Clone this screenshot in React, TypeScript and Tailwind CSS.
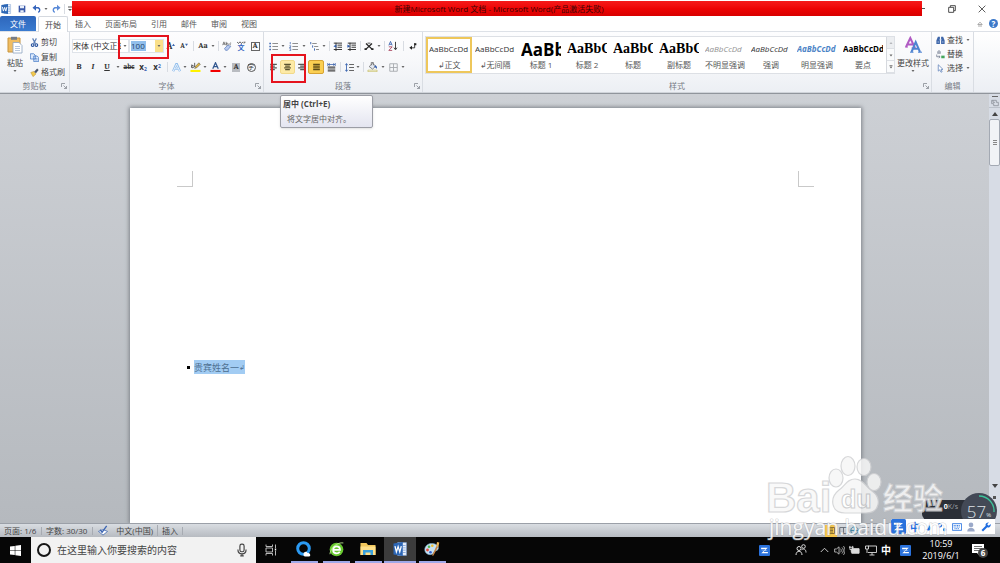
import type { ReactNode } from 'react';

type ChildProps = { children?: ReactNode };

function Svg({ box = '0 0 12 12', className = 'h-3 w-3', children }: ChildProps & { box?: string; className?: string }) {
  return (
    <svg viewBox={box} className={`${className} shrink-0`} fill="none" aria-hidden="true">
      {children}
    </svg>
  );
}

function Tool({ label, w = 'w-3.5', active = '', children }: ChildProps & { label: string; w?: string; active?: string }) {
  return (
    <button type="button" aria-label={label} className={`${w} ${active} flex h-3.5 shrink-0 items-center justify-center leading-none`}>
      {children}
    </button>
  );
}

function Caret({ w = 'w-1.5' }: { w?: string }) {
  return (
    <span className={`${w} flex shrink-0 justify-center`}>
      <Svg box="0 0 4 4" className="h-1 w-1">
        <path d="M.5 1h3L2 3z" fill="#666" />
      </Svg>
    </span>
  );
}

function Sep({ w = 'w-1' }: { w?: string }) {
  return (
    <span className={`${w} flex h-2.5 shrink-0 justify-center`}>
      <span className="w-px bg-[#d8dce2]" />
    </span>
  );
}

function Group({ name, width, launcher = true, children }: ChildProps & { name: string; width: string; launcher?: boolean }) {
  return (
    <section
      aria-label={name}
      className={`${width} relative flex flex-col border-r border-[#d9dde3] bg-linear-to-b from-[#fdfdfe] via-[#f7f8fa] to-[#eceff4]`}
    >
      <div className="h-12">{children}</div>
      <div className="flex h-3 items-center">
        <span className="flex-1 pl-2 text-center leading-3 text-[#777c85]">{name}</span>
        <span className="w-2">
          {launcher && (
            <Svg box="0 0 6 6" className="h-1.5 w-1.5">
              <path d="M.5 4V.5H4M2.5 2.5l3 3M5.5 3v2.5H3" stroke="#868b93" strokeWidth=".8" />
            </Svg>
          )}
        </span>
      </div>
    </section>
  );
}

function SIcon({ className }: { className: string }) {
  return (
    <Svg className={className}>
      <rect width="12" height="12" rx="1.2" fill="#2a72dd" />
      <path d="M2.3 3.8h5.4M4.3 8.3h5.4" stroke="#fff" strokeWidth="1.5" />
      <path d="M9.6 3.1 5.900 6.400H2.400L6.200 5.600 7.600 3.100zM2.400 9l3.700-3.300h3.500L5.800 6.500 4.400 9z" fill="#fff" />
    </Svg>
  );
}

function WordIcon({ className }: { className: string }) {
  return (
    <Svg className={className}>
      <path d="M4 .5h7.5v11H4z" fill="#e9f1fc" stroke="#7ea0d0" strokeWidth=".6" />
      <path d="M8.5 3h2.3M8.5 5h2.3M8.5 7h2.3M8.5 9h2.3" stroke="#6b93cf" strokeWidth=".6" />
      <path d="M.4 1.2 8.4 0v12L.4 10.8z" fill="#2c66b5" />
      <path d="m1.7 3.5 1.2 5L4.4 4l1.4 4.5 1.3-5" stroke="#fff" strokeWidth="1.1" />
    </Svg>
  );
}

function TitleBar() {
  return (
    <header className="flex h-4 items-stretch bg-white pt-px">
      <div className="flex w-[72px] shrink-0 items-center">
        <WordIcon className="h-2.5 w-3" />
        <span className="ml-1.5 flex w-2 justify-center">
          <Svg className="h-2 w-2">
            <path d="M1 1h10v10H1z" fill="#3958a8" />
            <path d="M3 1h6v4H3zM3.5 8h5v3h-5z" fill="#e8effb" />
          </Svg>
        </span>
        <button type="button" aria-label="撤销" className="ml-1.5">
          <Svg className="h-2.5 w-2.5">
            <path d="M3 4.5h4.5a3 3 0 0 1 0 5.5" stroke="#3665bc" strokeWidth="1.7" />
            <path d="M4.8 1v7L.6 4.5z" fill="#3665bc" />
          </Svg>
        </button>
        <Caret w="w-2" />
        <button type="button" aria-label="重复" className="ml-px">
          <Svg className="h-2.5 w-2.5">
            <path d="M9 4.5H4.5a3 3 0 0 0 0 5.5" stroke="#5b8bd8" strokeWidth="1.7" />
            <path d="M7.2 1v7l4.2-3.5z" fill="#5b8bd8" />
          </Svg>
        </button>
        <Sep w="w-1.5" />
        <Svg box="0 0 6 6" className="h-1.5 w-1.5">
          <path d="M1 1h4" stroke="#555" />
          <path d="M1 3h4L3 5z" fill="#555" />
        </Svg>
      </div>
      <h1 className="flex min-w-0 flex-1 items-center justify-center bg-linear-to-b from-[#f51a1a] via-[#ee0404] to-[#d80000] pl-1 leading-none whitespace-nowrap text-[#3a0505]">
        新建Microsoft Word 文档 - Microsoft Word(产品激活失败)
      </h1>
      <div className="flex w-[78px] shrink-0 items-center">
        <button type="button" aria-label="最小化" className="flex w-4">
          <span className="h-px w-[3px] bg-[#555]" />
        </button>
        <button type="button" aria-label="还原" className="flex w-7 justify-center">
          <Svg className="h-2 w-2">
            <path d="M1 3.5h7.5V11H1zM3.5 3V1H11v7.5H9" stroke="#333" strokeWidth="1.3" />
          </Svg>
        </button>
        <button type="button" aria-label="关闭" className="flex w-8 justify-center">
          <Svg className="h-2 w-2">
            <path d="m1 1 10 10M11 1 1 11" stroke="#333" strokeWidth="1.2" />
          </Svg>
        </button>
      </div>
    </header>
  );
}

const tabs = [
  { name: '插入', w: 'w-[30px]' },
  { name: '页面布局', w: 'w-[46px]' },
  { name: '引用', w: 'w-[30px]' },
  { name: '邮件', w: 'w-[30px]' },
  { name: '审阅', w: 'w-[30px]' },
  { name: '视图', w: 'w-[30px]' },
];

function Tabs() {
  return (
    <nav className="flex h-4 items-stretch border-b border-[#dde1e7] bg-white leading-none">
      <button type="button" className="w-9 rounded-t-xs bg-linear-to-b from-[#2e66bb] to-[#3a7bd0] text-white">
        文件
      </button>
      <button type="button" className="-mb-px ml-0.5 w-[30px] rounded-t-xs border border-b-0 border-[#d5d9df] bg-white text-[#444]">
        开始
      </button>
      {tabs.map((t) => (
        <button key={t.name} type="button" className={`${t.w} text-[#555]`}>
          {t.name}
        </button>
      ))}
      <div className="ml-auto flex items-center gap-1.5 pr-0.5">
        <button type="button" aria-label="折叠功能区">
          <Svg box="0 0 6 6" className="h-1.5 w-1.5">
            <path d="M.8 3.5 3 1.2l2.2 2.3zM1 5h4" stroke="#888" strokeWidth=".7" />
          </Svg>
        </button>
        <button type="button" aria-label="帮助" className="flex h-[9px] w-[9px] items-center justify-center rounded-full bg-[#3b78c9] font-bold text-white">
          ?
        </button>
      </div>
    </nav>
  );
}

function Clipboard() {
  return (
    <Group name="剪贴板" width="w-[70px]">
      <div className="flex h-full">
        <button type="button" className="flex w-[30px] flex-col items-center pt-1 text-[#444]">
          <Svg box="0 0 16 18" className="h-[18px] w-4">
            <path d="M1 2h12v14H1z" fill="#f0bd62" stroke="#c8943c" />
            <path d="M4 .8h6v3H4z" fill="#777d87" />
            <path d="M6 6.5h6l3 3V17H6z" fill="#fff" stroke="#8da3c0" strokeWidth=".8" />
            <path d="M8 10.5h5M8 12.5h5M8 14.5h5" stroke="#9bb0cd" strokeWidth=".7" />
          </Svg>
          <span className="mt-[3px] leading-3">粘贴</span>
          <Caret />
        </button>
        <div className="flex flex-col gap-px pt-[3px] text-[#444]">
          <button type="button" className="flex h-3.5 items-center gap-0.5 leading-none">
            <Svg className="h-[9px] w-[9px]">
              <path d="m3.5.5 3.7 7M8.5.5 4.8 7.5" stroke="#597db5" strokeWidth="1.5" />
              <circle cx="3.5" cy="9.4" r="1.8" stroke="#244f9c" strokeWidth="1.4" />
              <circle cx="8.5" cy="9.4" r="1.8" stroke="#244f9c" strokeWidth="1.4" />
            </Svg>
            剪切
          </button>
          <button type="button" className="flex h-3.5 items-center gap-0.5 leading-none">
            <Svg className="h-[9px] w-[9px]">
              <path d="M.5 1H5l2 2v5H.5zM5 4h4.5l2 2v5.5H5z" fill="#dce9fb" stroke="#4277c4" />
              <path d="M6.5 7.5h3.5M6.5 9.3h3.5" stroke="#4277c4" strokeWidth=".7" />
            </Svg>
            复制
          </button>
          <button type="button" className="flex h-3.5 items-center gap-0.5 leading-none">
            <Svg className="h-[9px] w-[9px]">
              <path d="m1 6 4-1.5L8 8l-4 3.5z" fill="#f2c94f" stroke="#b08a2a" strokeWidth=".6" />
              <path d="m5.5 5 4-4.3 2 1.8L8 7z" fill="#49546c" />
            </Svg>
            格式刷
          </button>
        </div>
      </div>
    </Group>
  );
}

function FontGroup() {
  return (
    <Group name="字体" width="w-[194px]">
      <div className="flex h-full flex-col gap-[7px] pt-[7px] pl-0.5">
        <div className="flex items-center">
          <div className="flex h-3.5 w-[57px] items-center border border-[#dfe3e9] bg-white">
            <select aria-label="字体" className="w-12 appearance-none overflow-hidden whitespace-nowrap text-[#333]">
              <option>宋体 (中文正文)</option>
            </select>
            <Caret w="w-2" />
          </div>
          <div className="flex h-3.5 w-[35px] items-center border border-[#dfe3e9] bg-white">
            <input aria-label="字号" defaultValue="100" className="mx-px h-2.5 w-[15px] bg-[#91bfec] text-[8px] text-[#23436b]" />
            <span className="ml-auto flex h-full w-2 items-center justify-center bg-[#fae08a]">
              <Caret />
            </span>
          </div>
          <Tool label="增大字体">
            <span className="font-serif text-[9px] font-bold text-[#333]">A</span>
            <Svg box="0 0 4 6" className="h-1.5 w-[3px]">
              <path d="M0 3h4L2 0z" fill="#3b65b0" />
            </Svg>
          </Tool>
          <Tool label="缩小字体" w="w-3">
            <span className="font-serif text-[7px] font-bold text-[#333]">A</span>
            <Svg box="0 0 4 6" className="h-1.5 w-[3px]">
              <path d="M0 0h4L2 3z" fill="#3b65b0" />
            </Svg>
          </Tool>
          <Sep w="w-1.5" />
          <Tool label="更改大小写">
            <span className="font-serif font-bold text-[#333]">Aa</span>
          </Tool>
          <Caret />
          <Sep />
          <Tool label="清除格式">
            <Svg className="h-2.5 w-2.5">
              <path d="m.8 5 1.500-4 1.500 4M1.300 3.700h2M5 1v4M5 3.700a1.300 1.200 0 1 1 0 .2M11 2.500c-2-.7-2.500 2.500-.2 2.200" stroke="#555" strokeWidth=".8" />
              <path d="m3 9 4-4 3.500 1.500-4 4.700H4.300z" fill="#b8caef" stroke="#5274b8" strokeWidth=".8" />
            </Svg>
          </Tool>
          <Tool label="拼音指南">
            <span className="flex flex-col items-center leading-none">
              <Svg box="0 0 9 3" className="h-[3px] w-[9px]">
                <path d="m0 .8 1.500 1.700L3 .8l1.500 1.700L6 .8M7 2.500V1.200h1.500" stroke="#444" strokeWidth=".8" />
              </Svg>
              <span className="text-[7px] leading-[7px] font-bold text-[#2d5fc0]">文</span>
            </span>
          </Tool>
          <Tool label="字符边框">
            <span className="flex h-[9px] w-[9px] items-center justify-center border border-[#666] font-serif font-bold text-[#333]">A</span>
          </Tool>
        </div>
        <div className="flex items-center text-[#333]">
          <Tool label="加粗"><b className="font-serif">B</b></Tool>
          <Tool label="倾斜"><b className="font-serif italic">I</b></Tool>
          <Tool label="下划线"><b className="font-serif underline">U</b></Tool>
          <Caret w="w-2" />
          <Tool label="删除线"><b className="font-serif text-[7px] line-through">abc</b></Tool>
          <Tool label="下标"><b>x<sub className="text-[5px] text-[#3b65b0]">2</sub></b></Tool>
          <Tool label="上标"><b>x<sup className="text-[5px] text-[#3b65b0]">2</sup></b></Tool>
          <Sep w="w-1.5" />
          <Tool label="文本效果" w="w-3">
            <Svg className="h-[9px] w-[9px]">
              <path d="M1.5 11 5.8 1.3h.6L10.7 11M3.5 7.8h5" stroke="#8fbdec" strokeWidth="3" />
              <path d="M1.5 11 6 1.5l4.5 9.5M3.5 7.8h5" stroke="#fff" strokeWidth="1" />
            </Svg>
          </Tool>
          <Caret />
          <Tool label="突出显示">
            <Svg className="h-2.5 w-[11px]">
              <path d="M0 9.5h12V12H0z" fill="#fff200" />
              <path d="M1.5 7V3M1.5 5.5a1.3 1.3 0 1 1 0 .2M5 1v5" stroke="#444" />
              <path d="m5 7.7 1-2.6L10 1l1.8 1.6-4.2 4.2z" fill="#e6b93f" stroke="#5a5c4a" strokeWidth=".7" />
            </Svg>
          </Tool>
          <Caret />
          <Tool label="字体颜色">
            <Svg className="h-2.5 w-[11px]">
              <path d="M0 9.5h12V12H0z" fill="#f20000" />
              <path d="M2.7 8 6 .8 9.3 8M4 5.5h4" stroke="#33588f" strokeWidth="1.5" />
            </Svg>
          </Tool>
          <Caret />
          <Tool label="字符底纹" w="w-4">
            <span className="flex h-[9px] w-2 items-center justify-center bg-[#b9bcc1] font-serif font-bold">A</span>
          </Tool>
          <Tool label="带圈字符">
            <span className="flex h-[9px] w-[9px] items-center justify-center rounded-full border border-[#555] text-[6px]">字</span>
          </Tool>
        </div>
      </div>
      <span className="pointer-events-none absolute top-[3px] left-12 z-10 h-6 w-[51px] border-2 border-[#e5131d]" />
    </Group>
  );
}

function Lines({ d, stroke = '#444' }: { d: string; stroke?: string }) {
  return (
    <Svg className="h-[9px] w-[9px]">
      <path d={d} stroke={stroke} strokeWidth="1.2" />
    </Svg>
  );
}

function AlignLines({ d, stroke = '#555' }: { d: string; stroke?: string }) {
  return (
    <Svg className="h-2 w-[9px]">
      <path d={d} stroke={stroke} strokeWidth="1.8" />
    </Svg>
  );
}

function ParagraphGroup() {
  return (
    <Group name="段落" width="w-[159px]">
      <div className="flex h-full flex-col gap-[7px] pt-[7px] pl-0.5">
        <div className="flex items-center">
          <Tool label="项目符号">
            <Svg className="h-[9px] w-[9px]">
              <path d="M4.5 2H12M4.5 6H12M4.5 10H12" stroke="#777" strokeWidth="1.1" />
              <path d="M.5 1h2v2h-2zM.5 5h2v2h-2zM.5 9h2v2h-2z" fill="#315dac" />
            </Svg>
          </Tool>
          <Caret />
          <Tool label="编号" w="w-[15px]">
            <Svg className="h-[9px] w-[9px]">
              <path d="M4.5 2H12M4.5 6H12M4.5 10H12" stroke="#777" strokeWidth="1.1" />
              <path d="M1.7 0v3M.5 5h1.8v1.2L.6 7.5h2M.5 9h1.8v2.5H.5" stroke="#315dac" strokeWidth=".9" />
            </Svg>
          </Tool>
          <Caret />
          <Tool label="多级列表">
            <Svg className="h-[9px] w-[9px]">
              <path d="M3 2h6M5.5 6H11M8 10h4" stroke="#777" strokeWidth="1.1" />
              <path d="M1 0v3M3.5 4.5v3M6 8.5v3" stroke="#315dac" strokeWidth="1.2" />
            </Svg>
          </Tool>
          <Caret />
          <Sep />
          <Tool label="减少缩进" w="w-[13px]">
            <Svg className="h-[9px] w-[9px]">
              <path d="M1 1.5h11M6 4.2h6M6 7h6M1 10h11M4 1v11" stroke="#333" strokeWidth="1.3" />
              <path d="M4.5 3.2v4.6L.5 5.5z" fill="#315dac" />
            </Svg>
          </Tool>
          <Tool label="增加缩进">
            <Svg className="h-[9px] w-[9px]">
              <path d="M1 1.5h11M6 4.2h6M6 7h6M1 10h11M4 1v11" stroke="#333" strokeWidth="1.3" />
              <path d="M.5 3.2v4.6l4-2.3z" fill="#315dac" />
            </Svg>
          </Tool>
          <Sep />
          <Tool label="中文版式">
            <Svg className="h-[9px] w-2.5">
              <path d="m2 2 8 7.5M10 2 2 9.5" stroke="#222" strokeWidth="1.7" />
              <path d="M4 1.5h4" stroke="#222" />
              <path d="M0 8.3h3v2.4H0zM9 8.3h3v2.4H9z" fill="#222" />
            </Svg>
          </Tool>
          <Caret />
          <Sep />
          <Tool label="排序">
            <Svg className="h-2.5 w-2.5">
              <path d="m1 5.3 2-4.8 2 4.8M1.8 4h2.5" stroke="#315dac" />
              <path d="M1 7h4l-4 4.3h4" stroke="#a33b55" />
              <path d="M9 1v9M7.2 8 9 10.6 10.8 8" stroke="#444" strokeWidth="1.2" />
            </Svg>
          </Tool>
          <Sep w="w-1.5" />
          <Tool label="显示编辑标记">
            <Svg className="h-[9px] w-2">
              <path d="M8.5 1v7H4" stroke="#333" strokeWidth="1.4" />
              <path d="m.5 8 4-3v6zM8 1h3v3H8z" fill="#222" />
            </Svg>
          </Tool>
        </div>
        <div className="flex items-center">
          <Tool label="左对齐"><AlignLines d="M1 2h10M1 4.7h7M1 7.4h10M1 10h7" /></Tool>
          <Tool label="居中" w="w-[15px]" active="rounded-xs border border-[#f1d98a] bg-[#fdeaa6]"><AlignLines d="M1 2h10M2.500 4.700h7M1 7.400h10M2.500 10h7" stroke="#5a532f" /></Tool>
          <Tool label="右对齐" w="w-[13px]"><AlignLines d="M1 2h10M4 4.7h7M1 7.4h10M4 10h7" /></Tool>
          <Tool label="两端对齐" w="w-4" active="rounded-xs border border-[#d7a334] bg-[#fbcf52]"><AlignLines d="M1 2h10M1 4.700h10M1 7.400h10M1 10h10" stroke="#5d4c17" /></Tool>
          <Tool label="分散对齐">
            <Svg className="h-[9px] w-[9px]">
              <path d="M1 5.5h10M1 8h10M1 10.5h10" stroke="#444" strokeWidth="1.6" />
              <path d="M1 0v4M11 0v4M1.5 2h9M4 .7 2 2l2 1.3M8 .7 10 2 8 3.3" stroke="#365eaa" />
            </Svg>
          </Tool>
          <Sep w="w-[5px]" />
          <Tool label="行距" w="w-3">
            <Svg className="h-[9px] w-[9px]">
              <path d="M5.5 2H12M5.5 6H12M5.5 10H12" stroke="#555" strokeWidth="1.2" />
              <path d="M2 1v10M.3 3 2 .8 3.7 3M.3 9 2 11.2 3.7 9" stroke="#315dac" strokeWidth="1.1" />
            </Svg>
          </Tool>
          <Caret />
          <Sep />
          <Tool label="底纹" w="w-[15px]">
            <Svg className="h-2.5 w-[11px]">
              <path d="M.5 9.8h11v1.8H.5z" fill="#fff" stroke="#c0b552" strokeWidth=".8" />
              <path d="m2 5.5 4-4 4 3.5-4 3.5z" fill="#e5eaf2" stroke="#555" strokeWidth=".8" />
              <path d="M9 4c2 .5 2.6 2 2.4 4.2C10 7.4 9.7 6 8 6z" fill="#315dac" />
              <path d="M4.5 4V.5H7V4" stroke="#555" strokeWidth=".8" />
            </Svg>
          </Tool>
          <Caret />
          <Tool label="边框"><Lines d="M1 1h10v10H1zM6 1v10M1 6h10" stroke="#a6a9ae" /></Tool>
          <Caret />
        </div>
      </div>
      <span className="pointer-events-none absolute top-[22px] left-[7px] z-10 h-[29px] w-[35px] border-2 border-[#e5131d]" />
      <div role="tooltip" className="absolute top-[63px] left-4 z-20 h-[33px] w-[93px] rounded-xs border border-[#9b9da5] bg-linear-to-b from-white to-[#e4e5f0] px-0.5 shadow-sm">
        <p className="mt-0.5 leading-3 font-bold text-[#444]">居中 (Ctrl+E)</p>
        <p className="mt-[3px] pl-1 leading-3 text-[#666]">将文字居中对齐。</p>
      </div>
    </Group>
  );
}

const styles = [
  { name: '↲正文', sample: 'text-[8px] text-[#333]' },
  { name: '↲无间隔', sample: 'text-[8px] text-[#333]' },
  { name: '标题 1', sample: 'text-[17px] font-bold text-black' },
  { name: '标题 2', sample: "text-[14px] font-bold text-black font-['Liberation_Serif',serif]" },
  { name: '标题', sample: "text-[14px] font-bold text-black font-['Liberation_Serif',serif]" },
  { name: '副标题', sample: "text-[14px] font-bold text-black font-['Liberation_Serif',serif]" },
  { name: '不明显强调', sample: 'text-[8px] italic text-[#929292]' },
  { name: '强调', sample: 'text-[8px] italic text-[#333]' },
  { name: '明显强调', sample: 'text-[8px] italic font-bold text-[#4b83c6]' },
  { name: '要点', sample: 'text-[8px] font-bold text-black' },
];

function StylesGroup() {
  return (
    <Group name="样式" width="w-[509px]">
      <div className="flex h-full items-start pt-1 pl-0.5">
        <div className="flex h-[38px] w-[470px] border border-[#dde0e5] bg-white">
          {styles.map((s, i) => (
            <button
              key={s.name}
              type="button"
              className={`${i === 0 ? 'border-2 border-[#eec75b]' : 'border-2 border-transparent'} flex w-[46px] shrink-0 flex-col items-center overflow-hidden text-[#555]`}
            >
              <span className={`${s.sample} flex h-[22px] w-10 items-center overflow-hidden leading-none whitespace-nowrap`}>AaBbCcDd</span>
              <span className="leading-3 whitespace-nowrap">{s.name}</span>
            </button>
          ))}
          <div className="flex flex-1 flex-col border-l border-[#d6d9de]">
            {['上一行', '下一行', '更多'].map((n, i) => (
              <button key={n} type="button" aria-label={n} className={`${i === 0 ? 'bg-[#eceef1]' : 'bg-[#fafbfc]'} flex flex-1 items-center justify-center border-b border-[#dde0e5]`}>
                <Svg box="0 0 4 4" className="h-1 w-1">
                  <path d={i === 0 ? 'M.5 3h3L2 1z' : 'M.5 1.5h3L2 3.5z'} fill={i === 0 ? '#b3b6ba' : '#666'} />
                  {i === 2 && <path d="M.5.5h3" stroke="#666" strokeWidth=".7" />}
                </Svg>
              </button>
            ))}
          </div>
        </div>
        <button type="button" className="flex w-9 flex-col items-center text-[#444]">
          <Svg box="0 0 18 18" className="h-[18px] w-[18px]">
            <path d="M2 11 6.3 2 11 12M3.5 8.5h6" stroke="#b05bc3" strokeWidth="2" />
            <path d="M1 11h3M7.5 12h4" stroke="#b05bc3" />
            <path d="m7.5 16 4.2-10L16 16M9 12.8h5.5" stroke="#4d83d1" strokeWidth="2" />
            <path d="M6 16.2h3.5M14 16.2h4" stroke="#4d83d1" />
          </Svg>
          <span className="mt-[3px] leading-3 whitespace-nowrap">更改样式</span>
          <Caret />
        </button>
      </div>
    </Group>
  );
}

function EditGroup() {
  return (
    <Group name="编辑" width="w-[42px]" launcher={false}>
      <div className="flex h-full flex-col pt-px pl-1 text-[#444]">
        <button type="button" className="flex h-3.5 items-center gap-0.5 leading-none">
          <Svg className="h-[9px] w-[9px]">
            <path d="M2.5 1h2.7v9.5H.5V6zM9.5 1H6.8v9.5h4.7V6z" fill="#3e66a9" />
            <path d="M4.5 5h3M2 8h2M8 8h2" stroke="#c5d7f2" />
          </Svg>
          查找
          <Caret />
        </button>
        <button type="button" className="flex h-3.5 items-center gap-0.5 leading-none">
          <Svg className="h-[9px] w-[9px]">
            <path d="M2.5 5V2.5a1.5 1.5 0 0 1 3 0V5M2.5 4h3M1 6v3h4M3.7 7.5 5.5 9l-1.8 1.7" stroke="#667086" />
            <path d="M7 7.5h4.5V11H7z" fill="#44a65a" />
          </Svg>
          替换
        </button>
        <button type="button" className="flex h-3.5 items-center gap-0.5 leading-none">
          <Svg className="h-[9px] w-[9px]">
            <path d="M3 1v8.5l2-1.7L6.7 11l1.5-.8L6.7 7.2h2.6z" fill="#fff" stroke="#5b7fb7" />
          </Svg>
          选择
          <Caret />
        </button>
      </div>
    </Group>
  );
}

function DocumentArea() {
  return (
    <main className="flex min-h-0 flex-1 border-t border-[#90959c] bg-linear-to-b from-[#cdd0d5] to-[#b5b9be]">
      <div className="flex min-w-0 flex-1 justify-center overflow-hidden pt-3.5 pl-0.5">
        <article className="w-[731px] bg-white pt-[63px] shadow-[0_0_4px_1px_#7d8288]">
          <div className="flex justify-between px-[47px]">
            <span className="h-4 w-4 border-r border-b border-[#c9c9c9]" />
            <span className="h-4 w-4 border-b border-l border-[#c9c9c9]" />
          </div>
          <p className="mt-[172px] ml-[57px] flex h-4 items-center gap-1 text-[9px] leading-none">
            <span className="h-[3px] w-[3px] bg-black" />
            <span className="flex h-3.5 items-center bg-[#a2ccf3] text-[#4d6f90]">
              贵宾姓名一<span className="text-[7px]">↲</span>
            </span>
          </p>
        </article>
      </div>
      <div className="flex w-[11px] shrink-0 flex-col items-center bg-[#d7dce5] pt-0.5 pb-1">
        <span className="h-px w-1.5 bg-[#666]" />
        <Svg className="mt-0.5 h-2 w-2">
          <path d="M1 2h7v3h3v5H4V7H1zM3 2v3h3" stroke="#7d838d" />
        </Svg>
        <button type="button" aria-label="向上滚动" className="flex h-3 w-full items-center justify-center border-t border-[#bcc2cb]">
          <Svg box="0 0 6 4" className="h-1 w-1.5"><path d="M0 4h6L3 0z" fill="#444" /></Svg>
        </button>
        <div className="flex h-[47px] w-full flex-col items-center justify-center gap-px rounded-xs border border-[#a3a9b3] bg-[#f1f3f6]">
          <span className="h-px w-1 bg-[#888]" />
          <span className="h-px w-1 bg-[#888]" />
          <span className="h-px w-1 bg-[#888]" />
        </div>
        <span className="flex-1" />
        <Svg box="0 0 6 4" className="h-1 w-1.5"><path d="M0 0h6L3 4z" fill="#444" /></Svg>
        <span className="mt-2 mb-5 h-[3px] w-[3px] bg-[#555]" />
      </div>
    </main>
  );
}

function StatusBar() {
  return (
    <footer className="flex h-3.5 shrink-0 items-center border-t border-[#9ba0a8] bg-linear-to-b from-[#d9dde2] to-[#b7bbc1] leading-none text-[#444] [&>span]:border-r [&>span]:border-[#a7abb2]">
      <span className="w-[42px] pl-1">页面: 1/6</span>
      <span className="w-[51px] pl-1">字数: 30/30</span>
      <span className="flex w-[65px] items-center justify-between pr-1 pl-1">
        <Svg className="h-[11px] w-3">
          <path d="m1 7 5-2 5 2-5 4z" fill="#fff" stroke="#587bb8" />
          <path d="m3 5 2 3 5-7" stroke="#3e66b2" strokeWidth="1.5" />
        </Svg>
        中文(中国)
      </span>
      <span className="w-[25px] pl-1">插入</span>
      <div className="mr-[119px] ml-auto flex h-full items-center gap-0.5">
        <i className="flex h-3 w-3 items-center justify-center bg-[#f5c64d]"><Lines d="M2 2h8v8H2zM4 4h4M4 6h4M4 8h4" stroke="#806a32" /></i>
        <Lines d="M1 2h10v8H1zM6 2v8" stroke="#646a73" />
        <Lines d="M6 1a5 5 0 1 0 .1 0M1 6h10M6 1v10" stroke="#397e9d" />
        <Lines d="M1 2h10M1 5h7M1 8h10" stroke="#848a93" />
        <Lines d="M1 2h10M1 5h10M1 8h10" stroke="#747a83" />
      </div>
    </footer>
  );
}

function Running({ label, active = false, children }: ChildProps & { label: string; active?: boolean }) {
  return (
    <button type="button" aria-label={label} className={`${active ? 'bg-[#3b3b3b]' : ''} flex h-full w-8 flex-col items-center justify-between`}>
      <span className="flex flex-1 items-center">{children}</span>
      <span className={`${active ? 'w-8' : 'w-[27px]'} h-0.5 bg-[#9fa8e8]`} />
    </button>
  );
}

function Taskbar() {
  return (
    <footer className="flex h-[26px] shrink-0 items-center bg-[#060606] text-white">
      <button type="button" aria-label="开始菜单" className="flex w-[31px] justify-center">
        <Svg className="h-[11px] w-[11px]">
          <path d="M0 1.7 5.2 1v4.7H0zM5.8.9 12 0v5.7H5.8zM0 6.3h5.2V11L0 10.3zM5.8 6.3H12V12l-6.2-.9z" fill="#fff" />
        </Svg>
      </button>
      <div className="flex h-full w-[225px] items-center bg-[#f2f2f2] px-1.5">
        <span className="h-3.5 w-3.5 shrink-0 rounded-full border-2 border-[#161616]" />
        <input aria-label="搜索" placeholder="在这里输入你要搜索的内容" className="ml-1.5 min-w-0 flex-1 text-[10px] placeholder:text-[#444]" />
        <Svg className="mr-px h-3.5 w-3.5">
          <rect x="4.2" y="1" width="3.6" height="6.5" rx="1.6" stroke="#444" />
          <path d="M2.5 5.5c0 5 7 5 7 0M6 9.3V11M4.5 11h3" stroke="#444" />
        </Svg>
      </div>
      <button type="button" aria-label="任务视图" className="flex w-8 justify-center pr-0.5">
        <Svg className="h-3 w-3">
          <path d="M1 .5v2h6.5v-2M1 11.5v-2h6.5v2M1 4h6.5v4H1zM10.5.5V4M10.5 7v4.5" stroke="#ccc" strokeWidth=".9" />
          <path d="M9.8 4.5h1.4v2H9.8z" fill="#fff" />
        </Svg>
      </button>
      <Running label="QQ浏览器">
        <Svg box="0 0 16 16" className="h-4 w-4">
          <circle cx="7.5" cy="7.5" r="5.8" stroke="#2b9af3" strokeWidth="3" />
          <path d="M7.5 13.5c0-3 3.5-3.5 4-1.4 2.4-1.2 4 3 1.5 3.4H9c-1 0-1.5-1-1.5-2z" fill="#fff" />
        </Svg>
      </Running>
      <Running label="360浏览器">
        <Svg box="0 0 16 16" className="h-[15px] w-[15px]">
          <circle cx="8" cy="8" r="7.3" fill="#67c72e" />
          <path d="M4.5 8.4h7.2c0-5-7.2-5-7.2 0 0 4.3 5 4.6 7 2" stroke="#fff" strokeWidth="2" />
          <path d="M1 13C1.5 6 9 0 15.3 1" stroke="#c7f49b" strokeWidth=".9" />
        </Svg>
      </Running>
      <Running label="文件资源管理器">
        <Svg box="0 0 16 14" className="h-3.5 w-4">
          <path d="M.5 1h6l1.5 2h7.5v10H.5z" fill="#f2c75c" />
          <path d="M.5 4.5h15V13H.5z" fill="#ffe08b" />
          <path d="M3 13V8h10v5h-2.5v-2.5h-5V13z" fill="#3aa0dc" />
        </Svg>
      </Running>
      <Running label="Word" active>
        <WordIcon className="h-3.5 w-3.5" />
      </Running>
      <Running label="画图">
        <Svg box="0 0 16 16" className="h-4 w-4">
          <path d="M7.500 2.500c5 0 8 3 6.500 6-1.300 2-3.500.5-4 2.500-.5 3.500-7.500 3.800-9-.8C-.2 6 3.500 2.500 7.500 2.500z" fill="#c8e3f4" stroke="#77a9ca" strokeWidth=".6" />
          <circle cx="3.500" cy="9" r="1.4" fill="#e54b3b" />
          <circle cx="5" cy="5.700" r="1.300" fill="#53b54e" />
          <circle cx="8.300" cy="4.800" r="1.300" fill="#efbd32" />
          <circle cx="6.500" cy="11.300" r="1.300" fill="#345ed1" />
          <path d="m8 14.500 4.500-9.500 1.700.8-4.900 9z" fill="#c78343" />
          <path d="m12.300 5.300.7-4.300 2.300.5-.9 4.600z" fill="#eab257" />
        </Svg>
      </Running>
      <div className="ml-auto flex h-full items-center">
        <span className="mr-[25px]"><SIcon className="h-[11px] w-[11px]" /></span>
        <Svg className="mr-[13px] h-3 w-3">
          <circle cx="4" cy="4.5" r="2" stroke="#ddd" />
          <circle cx="8.5" cy="2.5" r="1.8" stroke="#ddd" />
          <path d="M1 11c0-5 6-5 6 0M6.5 5.8C9 4 11 5.5 11 8.5" stroke="#ddd" />
        </Svg>
        <Svg className="mr-[5px] h-[9px] w-[9px]"><path d="m1 8 5-5 5 5" stroke="#ddd" strokeWidth="1.2" /></Svg>
        <Svg className="mr-1 h-[11px] w-[11px]">
          <path d="M.7 4.3h2L5.5 2v8L2.7 7.7h-2zM7 4c1.2 1 1.2 3 0 4M8.7 2.7c2 1.8 2 4.8 0 6.6M10.3 1.2c2.2 2.6 2.2 7 0 9.6" stroke="#ccc" strokeWidth=".9" />
        </Svg>
        <Svg className="mr-[5px] h-[11px] w-[11px]">
          <path d="M3 4h8v5H3z" fill="#ddd" stroke="#ddd" />
          <path d="M0 2.5h5M1 1v4h3V1M2.5 5v3" stroke="#ddd" />
        </Svg>
        <Svg className="mr-1 h-3 w-3">
          <path d="M3 2h8.5v6.5H3M7 8.5V11M4.5 11h5M.5 2h3v3h-3zM2 5v4" stroke="#ddd" strokeWidth=".9" />
        </Svg>
        <span className="mr-[9px] text-[10px] leading-none font-bold">中</span>
        <SIcon className="h-[11px] w-[11px]" />
        <time className="ml-[7px] flex w-[46px] flex-col items-center text-[9px] leading-3">
          <span>10:59</span>
          <span>2019/6/1</span>
        </time>
        <button type="button" aria-label="通知" className="relative ml-2 flex w-7">
          <Svg className="h-3 w-3"><path d="M0 0h12v9H8v3L5 9H0z" fill="#fff" /><path d="M2 2.5h8M2 4.5h8M2 6.5h8" stroke="#333" strokeWidth=".7" /></Svg>
          <span className="absolute top-1 left-1.5 flex h-2.5 w-2.5 items-center justify-center rounded-full bg-[#444] font-bold">6</span>
        </button>
      </div>
    </footer>
  );
}

function FloatingTools() {
  return (
    <>
      <div className="absolute right-[30px] bottom-[43px] z-20 flex h-5 w-12 items-start justify-end rounded-l-md bg-[#2b2f37] pt-[3px] pr-3 text-[7px] text-[#9da2aa]">
        <b className="leading-none text-white">0</b>
        <span className="leading-none">K/s</span>
      </div>
      <div className="absolute right-[3px] bottom-[34px] z-20 flex h-9 w-9 items-center justify-center rounded-full bg-[#434956] text-[#dfe3e8]">
        <svg viewBox="0 0 36 36" className="absolute inset-0 h-9 w-9" fill="none" aria-hidden="true">
          <path d="M18 3a15 15 0 0 1 15 16" stroke="#3cc49b" strokeWidth="1.3" />
        </svg>
        <span className="text-[17px] leading-none font-light">57</span>
        <span className="pt-2 text-[6px] leading-none">%</span>
      </div>
      <div className="absolute right-[5px] bottom-[29px] z-30 flex h-[15px] w-[104px] items-center bg-white text-[#1f6de0]">
        <SIcon className="h-[15px] w-[15px]" />
        <div className="flex flex-1 items-center justify-between px-1">
          <span className="text-[10px] leading-none font-bold">中</span>
          <Svg className="h-2 w-2"><path d="M6 0c-1 6 5 5 2 10C4 13 1 10 1 9c4 1 5-3 5-9z" fill="#1f6de0" /></Svg>
          <Svg className="h-2.5 w-2.5">
            <circle cx="3.500" cy="4" r="2" stroke="#1f6de0" strokeWidth="1.400" />
            <path d="M8 7.500a2 2 0 1 1 .5 3.500C7.500 11 6.500 9 8 7.500z" fill="#1f6de0" />
          </Svg>
          <Svg className="h-2.5 w-2.5"><path d="M.5 2h11v8H.5z" stroke="#1f6de0" /><path d="M2 4.2h8M2 6h8M3 8h6" stroke="#1f6de0" strokeDasharray="1.3 .7" /></Svg>
          <Svg className="h-2.5 w-2.5"><circle cx="6" cy="3.5" r="2.8" fill="#9ba9c9" /><path d="M1.5 11.5c0-6 9-6 9 0z" fill="#9ba9c9" /></Svg>
          <Svg className="h-2.5 w-2.5"><path d="m1.5 10.5 6-6" stroke="#1f6de0" strokeWidth="2.6" /><path d="M11.500 2.500 9.300 4.600 7.400 2.800 9.500.6C7 0 5 2 5.500 4.300L8 6.700c2.500.2 4.300-2 3.500-4.200z" fill="#1f6de0" /></Svg>
        </div>
      </div>
    </>
  );
}

function Watermark() {
  return (
    <svg
      viewBox="0 0 182 94"
      className="pointer-events-none absolute right-[52px] bottom-[15px] z-40 h-[94px] w-[182px] opacity-85"
      aria-hidden="true"
    >
      <g fill="#f6f6f6" stroke="#d0d1d3" strokeWidth="1.2">
        <ellipse cx="70" cy="24" rx="7" ry="9" />
        <ellipse cx="82" cy="12" rx="7" ry="9.5" />
        <ellipse cx="98" cy="13" rx="7" ry="8.5" />
        <ellipse cx="108" cy="28" rx="7" ry="8.5" />
        <path d="M89 25c-8 0-10 7-16 11-10 8-8 23 6 23h21c14 0 16-15 6-22-6-4-9-12-17-12z" />
      </g>
      <g fontFamily="Liberation Sans" fontWeight="bold">
        <text x="0" y="58" fontSize="42" fill="#f8f8f8" stroke="#d0d1d3" strokeWidth="1.2">Bai</text>
        <text x="75" y="54" fontSize="25" fill="#fff" stroke="#c6c7c9">du</text>
        <text x="117" y="55" fontSize="30" fill="#f8f8f8" stroke="#d0d1d3" fontFamily="Noto Sans CJK SC">经验</text>
      </g>
      <text x="3" y="81" fontSize="21" fontFamily="Open Sans" fill="#fff" stroke="#9fa1a4" strokeWidth="1.200" paintOrder="stroke" strokeOpacity=".55">
        jingyan.baidu.com
      </text>
    </svg>
  );
}

export default function App() {
  return (
    <div className="relative flex h-screen flex-col overflow-hidden bg-white font-['Open_Sans','Noto_Sans_CJK_SC',sans-serif] text-[8px]">
      <TitleBar />
      <Tabs />
      <div className="flex h-[61px] shrink-0 items-stretch border-b border-[#d0d4da] bg-linear-to-b from-white to-[#eceff4]">
        <Clipboard />
        <FontGroup />
        <ParagraphGroup />
        <StylesGroup />
        <EditGroup />
      </div>
      <DocumentArea />
      <StatusBar />
      <Taskbar />
      <FloatingTools />
      <Watermark />
    </div>
  );
}
